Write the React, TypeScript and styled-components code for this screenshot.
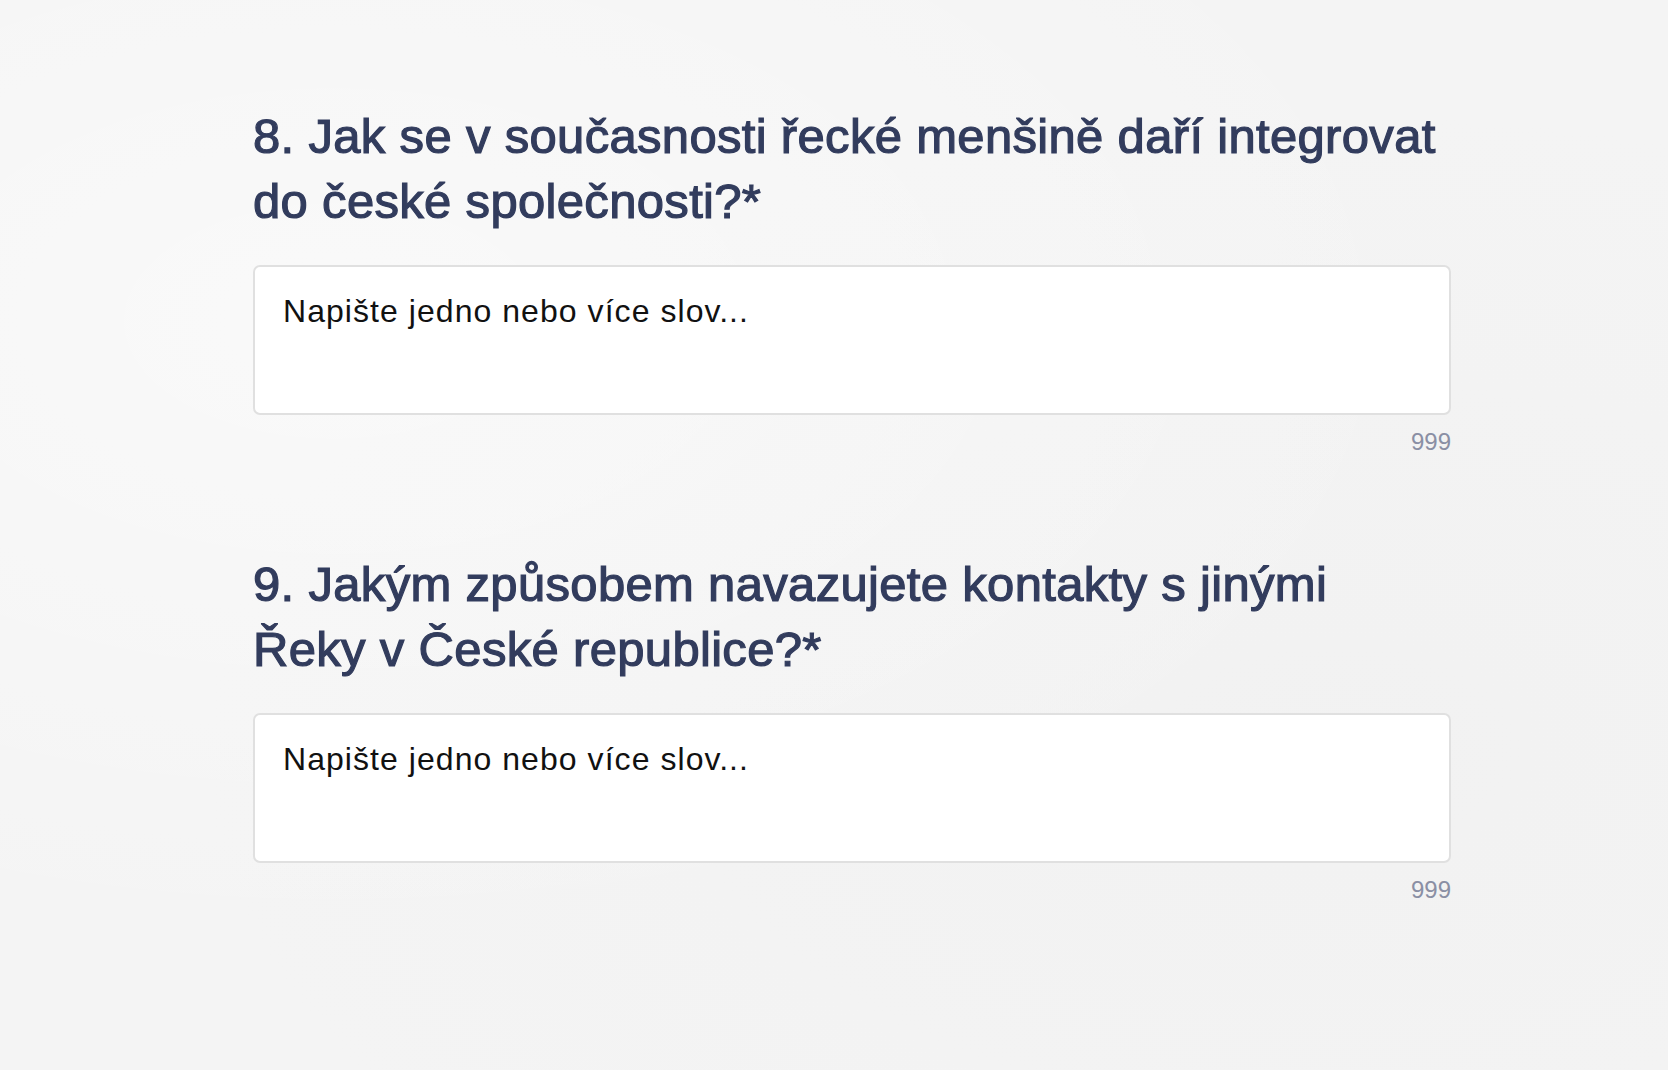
import React from "react";
import styled, { createGlobalStyle } from "styled-components";

const GlobalStyle = createGlobalStyle`
  html, body {
    margin: 0;
    padding: 0;
    background: #f4f4f4;
  }
  body {
    font-family: "Liberation Sans", Arial, sans-serif;
    -webkit-font-smoothing: antialiased;
  }
`;

const Page = styled.main`
  min-height: 1070px;
  box-sizing: border-box;
  padding: 104px 0 0 253px;
  background:
    radial-gradient(ellipse at 20% 30%, rgba(255,255,255,0.5), transparent 60%),
    radial-gradient(ellipse at 80% 70%, rgba(238,238,238,0.4), transparent 60%),
    #f4f4f4;
`;

const Form = styled.div`
  width: 1198px;
  display: flex;
  flex-direction: column;
  gap: 96px;
`;

const Question = styled.section`
  display: flex;
  flex-direction: column;
`;

const Title = styled.h2`
  margin: 0;
  max-width: 1188px;
  font-family: "Liberation Sans", Arial, sans-serif;
  font-weight: 400;
  font-size: 49px;
  line-height: 65px;
  color: #323c5d;
  -webkit-text-stroke: 1.2px #323c5d;
  letter-spacing: 0.32px;
`;

const Field = styled.textarea`
  margin-top: 31px;
  box-sizing: border-box;
  width: 100%;
  height: 150px;
  padding: 24px 28px;
  resize: none;
  background: #ffffff;
  border: 2px solid #e0e0e0;
  border-radius: 7px;
  font-family: "Liberation Sans", Arial, sans-serif;
  font-size: 32px;
  line-height: 40px;
  letter-spacing: 1.05px;
  color: #111;
  outline: none;
  &::placeholder {
    color: #111111;
    opacity: 1;
  }
`;

const Counter = styled.div`
  align-self: flex-end;
  margin-top: 13px;
  font-family: "Liberation Sans", Arial, sans-serif;
  font-size: 24px;
  line-height: 28px;
  color: #8a8fa4;
`;

const questions = [
  "8. Jak se v současnosti řecké menšině daří integrovat do české společnosti?*",
  "9. Jakým způsobem navazujete kontakty s jinými Řeky v České republice?*",
];

export default function App() {
  return (
    <>
      <GlobalStyle />
      <Page>
        <Form>
          {questions.map((q) => (
            <Question key={q}>
              <Title>{q}</Title>
              <Field placeholder="Napište jedno nebo více slov..." />
              <Counter>999</Counter>
            </Question>
          ))}
        </Form>
      </Page>
    </>
  );
}
